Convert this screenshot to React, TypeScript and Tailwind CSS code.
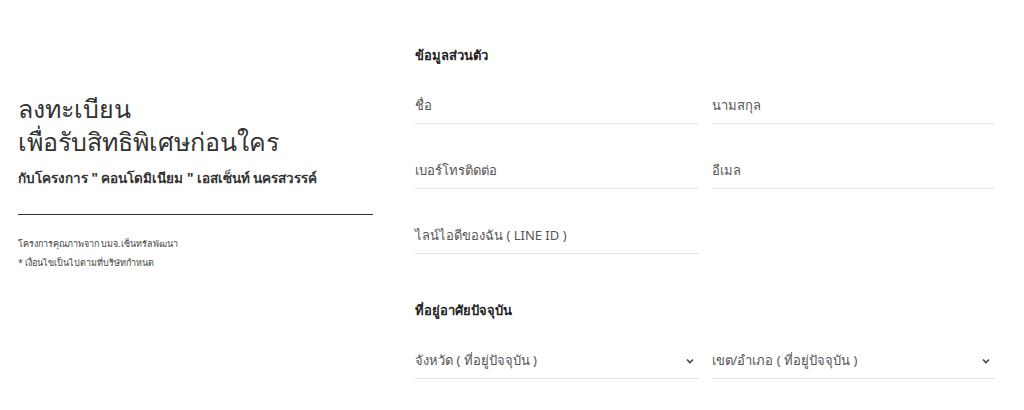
import React from 'react';

const Field = ({ label, select }: { label: string; select?: boolean }) => (
  <div className="flex h-[36px] items-center justify-between border-b border-[#e3e3e3] pr-1">
    <span className="text-[13px] text-[#555]">{label}</span>
    {select && (
      <svg width="10" height="10" viewBox="0 0 10 10" className="text-[#444]">
        <path d="M2 3.5 L5 6.5 L8 3.5" fill="none" stroke="currentColor" strokeWidth="1.6" />
      </svg>
    )}
  </div>
);

const App: React.FC = () => {
  return (
    <div className="flex h-[410px] w-[1024px] bg-white font-['Noto_Sans','Liberation_Sans',sans-serif] text-[#222]">
      <div className="w-[415px] pl-[18px] pt-[92px]">
        <div className="w-[355px]">
          <h1 className="text-[25px] font-light leading-[33px] text-[#333]">
            ลงทะเบียน
            <br />
            เพื่อรับสิทธิพิเศษก่อนใคร
          </h1>
          <p className="mt-[10px] text-[13.5px] font-bold text-[#333]">กับโครงการ " คอนโดมิเนียม " เอสเซ็นท์ นครสวรรค์</p>
          <div className="mt-[26px] border-b border-[#333]" />
          <p className="mt-[19px] text-[9px] leading-[19px] text-[#444]">
            โครงการคุณภาพจาก บมจ.เซ็นทรัลพัฒนา
            <br />* เงื่อนไขเป็นไปตามที่บริษัทกำหนด
          </p>
        </div>
      </div>
      <div className="w-[580px] pt-[44px]">
        <h2 className="text-[13px] font-bold leading-[22px]">ข้อมูลส่วนตัว</h2>
        <div className="mt-[22px] grid grid-cols-2 gap-x-[13px] gap-y-[29px]">
          <Field label="ชื่อ" />
          <Field label="นามสกุล" />
          <Field label="เบอร์โทรติดต่อ" />
          <Field label="อีเมล" />
          <Field label="ไลน์ไอดีของฉัน ( LINE ID )" />
          <div />
        </div>
        <h2 className="mt-[45px] text-[13px] font-bold leading-[22px]">ที่อยู่อาศัยปัจจุบัน</h2>
        <div className="mt-[22px] grid grid-cols-2 gap-x-[13px]">
          <Field label="จังหวัด ( ที่อยู่ปัจจุบัน )" select />
          <Field label="เขต/อำเภอ ( ที่อยู่ปัจจุบัน )" select />
        </div>
      </div>
    </div>
  );
};

export default App;
